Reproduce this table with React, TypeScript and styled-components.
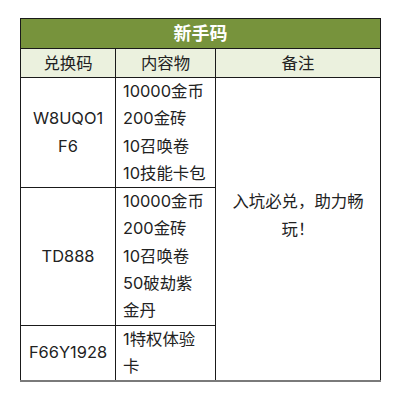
import React from "react";
import styled, { createGlobalStyle } from "styled-components";

const Global = createGlobalStyle`
  html, body { margin: 0; padding: 0; background: #ffffff; }
  body { font-family: Inter, "Noto Sans CJK SC", sans-serif; }
`;

const Page = styled.div`
  width: 400px;
  height: 400px;
  padding: 18px 0 0 20px;
  box-sizing: border-box;
`;

const Table = styled.table`
  border-collapse: collapse;
  table-layout: fixed;
  width: 360px;
  color: #222;
  font-size: 16.4px;
  border-bottom: 2px solid #7a7a7a;
`;

const TitleCell = styled.th`
  background: #77933c;
  color: #ffffff;
  font-weight: 700;
  font-size: 18px;
  height: 29px;
  padding: 0;
  line-height: 29px;
  border: 1px solid #1a1a1a;
`;

const HeadCell = styled.th`
  background: #ebf1de;
  font-weight: 400;
  height: 28px;
  padding: 0;
  line-height: 28px;
  border: 1px solid #1a1a1a;
`;

const Cell = styled.td<{ $align?: "left" | "center" }>`
  border: 1px solid #1a1a1a;
  text-align: ${(p) => p.$align ?? "center"};
  vertical-align: middle;
  line-height: 27.3px;
  padding: ${(p) => (p.$align === "left" ? "0 8px 0 7px" : "0 6px")};
  background: #ffffff;
`;

const NoteCell = styled(Cell)`
  padding: 0 10px 27px;
`;

const rows = [
  { code: "W8UQO1\u200BF6", items: ["10000金币", "200金砖", "10召唤卷", "10技能卡包"] },
  { code: "TD888", items: ["10000金币", "200金砖", "10召唤卷", "50破劫紫金丹"] },
  { code: "F66Y1928", items: ["1特权体验卡"] },
];

export default function App() {
  return (
    <>
      <Global />
      <Page>
        <Table>
          <colgroup>
            <col style={{ width: 95 }} />
            <col style={{ width: 100 }} />
            <col style={{ width: 165 }} />
          </colgroup>
          <thead>
            <tr>
              <TitleCell colSpan={3}>新手码</TitleCell>
            </tr>
            <tr>
              <HeadCell>兑换码</HeadCell>
              <HeadCell>内容物</HeadCell>
              <HeadCell>备注</HeadCell>
            </tr>
          </thead>
          <tbody>
            {rows.map((r, i) => (
              <tr key={r.code}>
                <Cell>{r.code}</Cell>
                <Cell $align="left">
                  {r.items.map((it) => (
                    <div key={it}>{it}</div>
                  ))}
                </Cell>
                {i === 0 && (
                  <NoteCell rowSpan={3}>入坑必兑，助力畅玩！</NoteCell>
                )}
              </tr>
            ))}
          </tbody>
        </Table>
      </Page>
    </>
  );
}
